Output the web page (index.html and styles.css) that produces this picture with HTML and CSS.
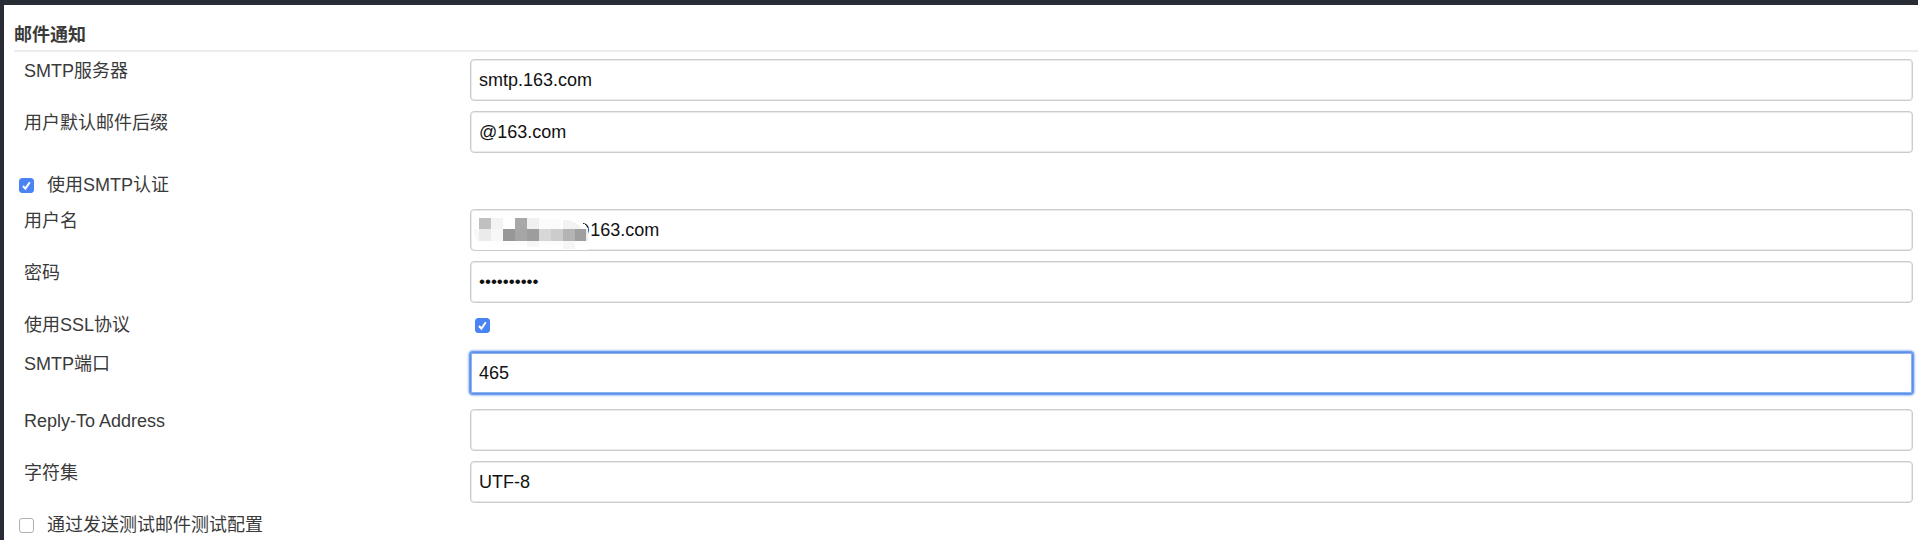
FILE: index.html
```html
<!DOCTYPE html>
<html lang="zh-CN">
<head>
<meta charset="utf-8">
<title>邮件通知</title>
<link rel="stylesheet" href="styles.css">
</head>
<body>
<form class="panel">
  <h1 class="section-title">邮件通知</h1>
  <div class="fields">
    <div class="row">
      <label class="label" for="smtp-host">SMTP服务器</label>
      <input class="text-input" id="smtp-host" type="text" value="smtp.163.com">
    </div>
    <div class="row">
      <label class="label" for="suffix">用户默认邮件后缀</label>
      <input class="text-input" id="suffix" type="text" value="@163.com">
    </div>
    <div class="option option-auth">
      <input class="checkbox" id="use-auth" type="checkbox" checked>
      <label for="use-auth">使用SMTP认证</label>
    </div>
    <div class="row">
      <label class="label" for="username">用户名</label>
      <div class="masked">
        <input class="text-input masked-input" id="username" type="text" value="@163.com">
        <svg class="mosaic" width="116" height="36" viewBox="0 0 116 36" shape-rendering="crispEdges" aria-hidden="true">
          <path d="M0 0H88Q100 1 105 6Q111 7 114 13V34H0Z" fill="#fff"/>
          <path d="M65 3H87V13H65Z" fill="#fbfbfb"/>
          <path d="M89 4Q98 4 103 8L109 13H89Z" fill="#f3f3f3"/>
          <path d="M5 2H17V13H5Z" fill="#c0c0c0"/>
          <path d="M17 2H29V13H17Z" fill="#f3f3f3"/>
          <path d="M41 2H53V13H41Z" fill="#a8a8a8"/>
          <path d="M53 2H65V13H53Z" fill="#f0f0f0"/>
          <path d="M0 13H5V25Q0 22 0 18Z" fill="#f8f8f8"/>
          <path d="M5 13H17V25H5Z" fill="#ebebeb"/>
          <path d="M17 13H29V25H17Z" fill="#f7f7f7"/>
          <path d="M29 13H41V25H29Z" fill="#979797"/>
          <path d="M41 13H53V25H41Z" fill="#a6a6a6"/>
          <path d="M53 13H65V25H53Z" fill="#9d9d9d"/>
          <path d="M65 13H77V25H65Z" fill="#d7d7d7"/>
          <path d="M77 13H89V25H77Z" fill="#cccccc"/>
          <path d="M89 13H101V25H89Z" fill="#b4b4b4"/>
          <path d="M101 13H112V25H101Z" fill="#9f9f9f"/>
          <path d="M112 13H114V25H112Z" fill="#eeeeee"/>
          <path d="M29 25H53V29H29ZM65 25H89V29H65ZM101 25H114V29H101Z" fill="#fcfcfc"/>
          <path d="M53 25H65V31H53ZM89 25H101V33H89Z" fill="#f6f6f6"/>
        </svg>
      </div>
    </div>
    <div class="row">
      <label class="label" for="password">密码</label>
      <input class="text-input secret" id="password" type="password" value="0000000000">
    </div>
    <div class="row row-wide-gap">
      <label class="label" for="use-ssl">使用SSL协议</label>
      <div class="check-cell"><input class="checkbox" id="use-ssl" type="checkbox" checked></div>
    </div>
    <div class="row row-wide-gap">
      <label class="label" for="port">SMTP端口</label>
      <input class="text-input is-active" id="port" type="text" value="465">
    </div>
    <div class="row">
      <label class="label" for="reply-to">Reply-To Address</label>
      <input class="text-input" id="reply-to" type="text" value="">
    </div>
    <div class="row">
      <label class="label" for="charset">字符集</label>
      <input class="text-input" id="charset" type="text" value="UTF-8">
    </div>
    <div class="option">
      <input class="checkbox" id="send-test" type="checkbox">
      <label for="send-test">通过发送测试邮件测试配置</label>
    </div>
  </div>
</form>
</body>
</html>
```
FILE: styles.css
```css
* {
  box-sizing: border-box;
}

html {
  min-height: 100%;
  background: #fff;
  border-top: 5px solid #282c35;
  border-left: 4px solid #282c35;
}

body {
  margin: 0;
  color: #3a3a3a;
  font-family: "Liberation Sans", "Noto Sans CJK SC", sans-serif;
  font-size: 18px;
  line-height: 24px;
}

.panel {
  padding: 18px 0 0 10px;
}

.section-title {
  margin: 0;
  padding-bottom: 3px;
  border-bottom: 2px solid #ececec;
  font-size: 18px;
  line-height: 24px;
  font-weight: 700;
}

.fields {
  display: flex;
  flex-direction: column;
  gap: 10px;
  padding: 7px 5px 0 0;
}

.row {
  display: grid;
  grid-template-columns: minmax(0, 446fr) minmax(0, 1443fr);
  align-items: start;
  padding-left: 10px;
}

.row-wide-gap {
  padding-bottom: 5px;
}

.text-input {
  display: block;
  width: 100%;
  height: 42px;
  margin: 0;
  padding: 0 8px;
  border: 1px solid #ccc;
  border-radius: 4px;
  outline: none;
  background: #fff;
  box-shadow: inset 0 0 0 1px #eaeaea;
  color: #111;
  font: inherit;
}

.text-input.is-active,
.text-input:focus {
  border-color: #5b8fe9;
  border-radius: 3px;
  box-shadow: 0 0 0 1px #6d9cec, 0 0 2px 2px #a9c6f7, inset 0 0 0 1px #8fb3f2;
}

.secret {
  font-size: 17px;
}

.masked {
  position: relative;
}

.masked-input {
  padding-left: 101px;
}

.mosaic {
  position: absolute;
  top: 7px;
  left: 4px;
  pointer-events: none;
}

.option {
  display: flex;
  align-items: center;
  gap: 13px;
  padding-left: 5px;
}

.option-auth {
  padding-top: 10px;
  padding-bottom: 2px;
}

.check-cell {
  display: flex;
  align-items: center;
  height: 24px;
  padding-left: 5px;
}

.checkbox {
  appearance: none;
  flex: none;
  width: 15px;
  height: 15px;
  margin: 0;
  border: 1px solid #b0b0b0;
  border-radius: 3px;
  background: #fff;
}

.checkbox:checked {
  border-color: #4a84f4;
  background: #4a84f4 url("data:image/svg+xml,%3Csvg xmlns='http://www.w3.org/2000/svg' viewBox='0 0 13 13'%3E%3Cpath d='M3 7l2.4 2.6L9.8 3.2' fill='none' stroke='white' stroke-width='2'/%3E%3C/svg%3E") center / 13px 13px no-repeat;
}
```
